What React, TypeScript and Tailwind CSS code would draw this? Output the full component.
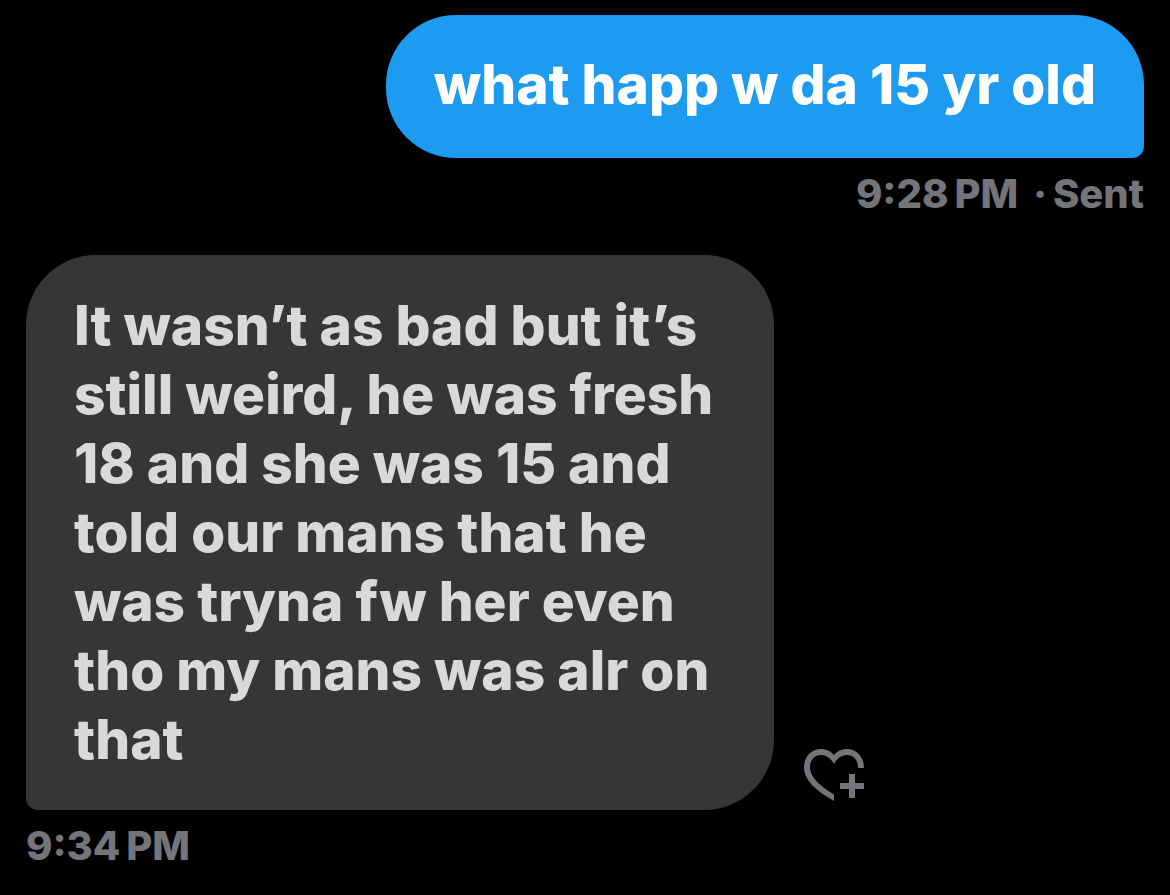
const receivedLines = [
  "It wasn’t as bad but it’s",
  "still weird, he was fresh",
  "18 and she was 15 and",
  "told our mans that he",
  "was tryna fw her even",
  "tho my mans was alr on",
  "that",
];

function HeartPlusIcon() {
  return (
    <svg
      viewBox="0 0 60 52"
      fill="currentColor"
      className="h-[52px] w-[60px]"
      aria-hidden="true"
    >
      <path d="M30 52C10 41 0 30 0 18.5C0 7 8 0 17 0C22.5 0 27 2.2 30 6C33 2.2 37.5 0 43 0C52 0 60 7 60 19H54C54 10.5 49 6 43 6C37.5 6 33 9.5 30 15C27 9.5 22.5 6 17 6C11 6 6 10.5 6 18.5C6 27 14 36 30 45.5Z" />
      <path d="M45 25H51V34H60V40H51V49H45V40H36V34H45Z" />
    </svg>
  );
}

export default function App() {
  return (
    <main className="flex min-h-screen flex-col bg-black px-[26px] pt-[15px] font-['Inter',sans-serif] font-extrabold">
      <section className="flex flex-col items-end">
        <p className="rounded-[70px] rounded-br-[12px] bg-[#1d9bf0] px-12 pt-[35px] pb-[39px] text-[55px] leading-[69px] text-white">
          what happ w da 15 yr old
        </p>
        <p className="mt-3 text-[40px] leading-12 whitespace-pre text-[#737579]">
          {"9:28\u2009PM\u2009 ·\u2009Sent"}
        </p>
      </section>

      <section className="mt-[37px]">
        <div className="flex items-end gap-[30px]">
          <p className="w-[748px] rounded-[70px] rounded-bl-[12px] bg-[#343638] px-12 py-9 text-[55px] leading-[69px] text-[#d9d9db]">
            {receivedLines.map((line) => (
              <span key={line} className="block whitespace-nowrap">
                {line}
              </span>
            ))}
          </p>
          <button type="button" aria-label="Add reaction" className="mb-[9px] text-[#737579]">
            <HeartPlusIcon />
          </button>
        </div>
        <p className="mt-3 text-[40px] leading-12 text-[#737579]">
          {"9:34\u2009PM"}
        </p>
      </section>
    </main>
  );
}
